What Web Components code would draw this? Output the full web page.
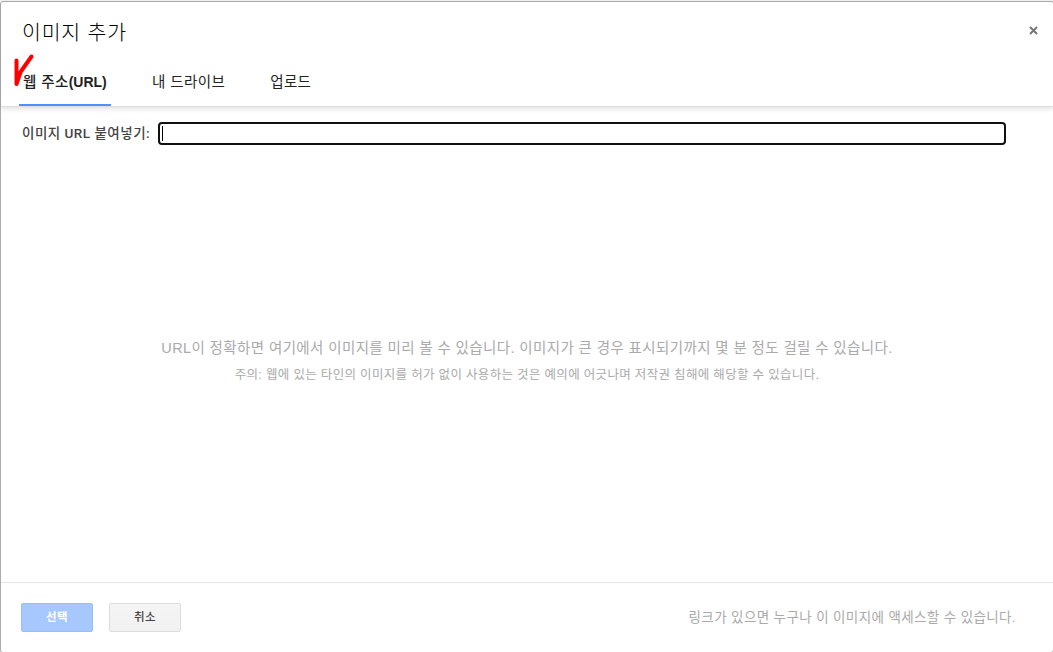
<!DOCTYPE html>
<html lang="ko">
<head>
<meta charset="utf-8">
<title>이미지 추가</title>
<style>
  html, body { height: 100%; margin: 0; }
  body {
    overflow: hidden;
    background: #f1f1f1;
    font-family: "Liberation Sans", "Noto Sans CJK KR", sans-serif;
  }
  picker-tab b { font-size: 14px; letter-spacing: 0; }
</style>
</head>
<body>
<picker-dialog>
  <span slot="title">이미지 추가</span>
  <picker-tab slot="tabs" selected>웹 주소<b>(URL)</b></picker-tab>
  <picker-tab slot="tabs">내 드라이브</picker-tab>
  <picker-tab slot="tabs">업로드</picker-tab>
  <url-field>이미지 URL 붙여넣기:</url-field>
  <preview-hint>
    URL이 정확하면 여기에서 이미지를 미리 볼 수 있습니다. 이미지가 큰 경우 표시되기까지 몇 분 정도 걸릴 수 있습니다.
    <span slot="note">주의: 웹에 있는 타인의 이미지를 허가 없이 사용하는 것은 예의에 어긋나며 저작권 침해에 해당할 수 있습니다.</span>
  </preview-hint>
  <picker-button slot="actions" primary>선택</picker-button>
  <picker-button slot="actions">취소</picker-button>
  <span slot="info">링크가 있으면 누구나 이 이미지에 액세스할 수 있습니다.</span>
</picker-dialog>

<script>
// HELPER

function attach(element, markup) {
  element.attachShadow({ mode: "open" }).innerHTML = markup;
}

// TABS

class PickerTab extends HTMLElement {
  constructor() {
    super();
    attach(this, `
      <style>
        :host {
          display: block;
          box-sizing: border-box;
          height: 47px;
          padding: 13px 4px 0;
          color: #222;
          font-size: 14.5px;
          line-height: 20px;
          letter-spacing: .4px;
          white-space: nowrap;
        }
        :host([selected]) {
          width: 92px;
          border-bottom: 2px solid #4d90fe;
          font-weight: 500;
        }
      </style>
      <slot></slot>
    `);
  }
}

// URL FIELD

class UrlField extends HTMLElement {
  constructor() {
    super();
    attach(this, `
      <style>
        :host {
          display: flex;
          align-items: center;
          padding: 15px 47px 0 21px;
        }
        label {
          width: 136px;
          margin-top: -2px;
          color: #444;
          font-family: Roboto, "Noto Sans CJK KR", sans-serif;
          font-size: 13.5px;
          font-weight: 500;
          line-height: 20px;
          letter-spacing: .48px;
          white-space: nowrap;
        }
        .input {
          flex: 1;
          box-sizing: border-box;
          height: 23px;
          padding: 2px;
          border: 2px solid #101010;
          border-radius: 4px;
          background: #fff;
        }
        .caret { width: 1px; height: 15px; background: #000; }
      </style>
      <label><slot></slot></label>
      <div class="input"><div class="caret"></div></div>
    `);
  }
}

// PREVIEW

class PreviewHint extends HTMLElement {
  constructor() {
    super();
    attach(this, `
      <style>
        :host {
          display: block;
          padding-top: 192px;
          color: #aaa;
          text-align: center;
          white-space: nowrap;
        }
        .main { font-size: 14.5px; line-height: 22px; letter-spacing: .38px; }
        .note { margin-top: 6px; font-size: 12.5px; line-height: 20px; letter-spacing: .32px; }
      </style>
      <div class="main"><slot></slot></div>
      <div class="note"><slot name="note"></slot></div>
    `);
  }
}

// BUTTON

class PickerButton extends HTMLElement {
  constructor() {
    super();
    attach(this, `
      <style>
        :host {
          display: block;
          box-sizing: border-box;
          width: 72px;
          height: 29px;
          border: 1px solid #dcdcdc;
          border-radius: 2px;
          background: linear-gradient(#f5f5f5, #f1f1f1);
          color: #444;
          font-size: 11.5px;
          font-weight: 500;
          line-height: 27px;
          letter-spacing: .3px;
          text-align: center;
        }
        :host([primary]) {
          border-color: #98bdfb;
          background: #a6c8ff;
          color: #fff;
          font-weight: 700;
        }
      </style>
      <slot></slot>
    `);
  }
}

// CHECK MARK

class RedMark extends HTMLElement {
  constructor() {
    super();
    attach(this, `
      <style>
        :host { position: absolute; left: 9px; top: 48px; }
        svg { display: block; }
      </style>
      <svg width="28" height="40" fill="none" stroke="#f00" stroke-width="4" stroke-linecap="round" stroke-linejoin="round">
        <path d="M6.500 10.500V34L10.500 22L21.500 6.500"/>
      </svg>
    `);
  }
}

// DIALOG

class PickerDialog extends HTMLElement {
  constructor() {
    super();
    attach(this, `
      <style>
        :host {
          display: flex;
          flex-direction: column;
          position: relative;
          box-sizing: border-box;
          width: 1054px;
          height: 652px;
          margin-top: 1px;
          border: 1px solid #acacac;
          border-radius: 3px;
          background: #fff;
        }
        header {
          box-sizing: border-box;
          height: 105px;
          border-bottom: 1px solid #dedede;
          box-shadow: 0 2px 5px rgba(0, 0, 0, .12);
        }
        .top {
          display: flex;
          justify-content: space-between;
          height: 57px;
          padding: 0 15px 0 21px;
        }
        h1 {
          margin: 17px 0 0;
          color: #000;
          font-size: 20.5px;
          font-weight: 300;
          line-height: 28px;
          letter-spacing: .8px;
        }
        .close { margin-top: 24px; }
        nav { display: flex; gap: 37px; padding-left: 18px; }
        main { flex: 1; }
        footer {
          display: flex;
          box-sizing: border-box;
          height: 70px;
          padding: 20px 37px 0 20px;
          border-top: 1px solid #e5e5e5;
        }
        .actions { display: flex; gap: 16px; }
        .info {
          margin-left: auto;
          color: #aaa;
          font-size: 13.5px;
          line-height: 29px;
          letter-spacing: .38px;
        }
      </style>
      <header>
        <div class="top">
          <h1><slot name="title"></slot></h1>
          <svg class="close" width="9" height="9" stroke="#777" stroke-width="2">
            <path d="M1 1L8 8M8 1L1 8"/>
          </svg>
        </div>
        <nav><slot name="tabs"></slot></nav>
      </header>
      <main><slot></slot></main>
      <footer>
        <div class="actions"><slot name="actions"></slot></div>
        <div class="info"><slot name="info"></slot></div>
      </footer>
      <red-mark></red-mark>
    `);
  }
}

customElements.define("picker-tab", PickerTab);
customElements.define("url-field", UrlField);
customElements.define("preview-hint", PreviewHint);
customElements.define("picker-button", PickerButton);
customElements.define("red-mark", RedMark);
customElements.define("picker-dialog", PickerDialog);
</script>
</body>
</html>
